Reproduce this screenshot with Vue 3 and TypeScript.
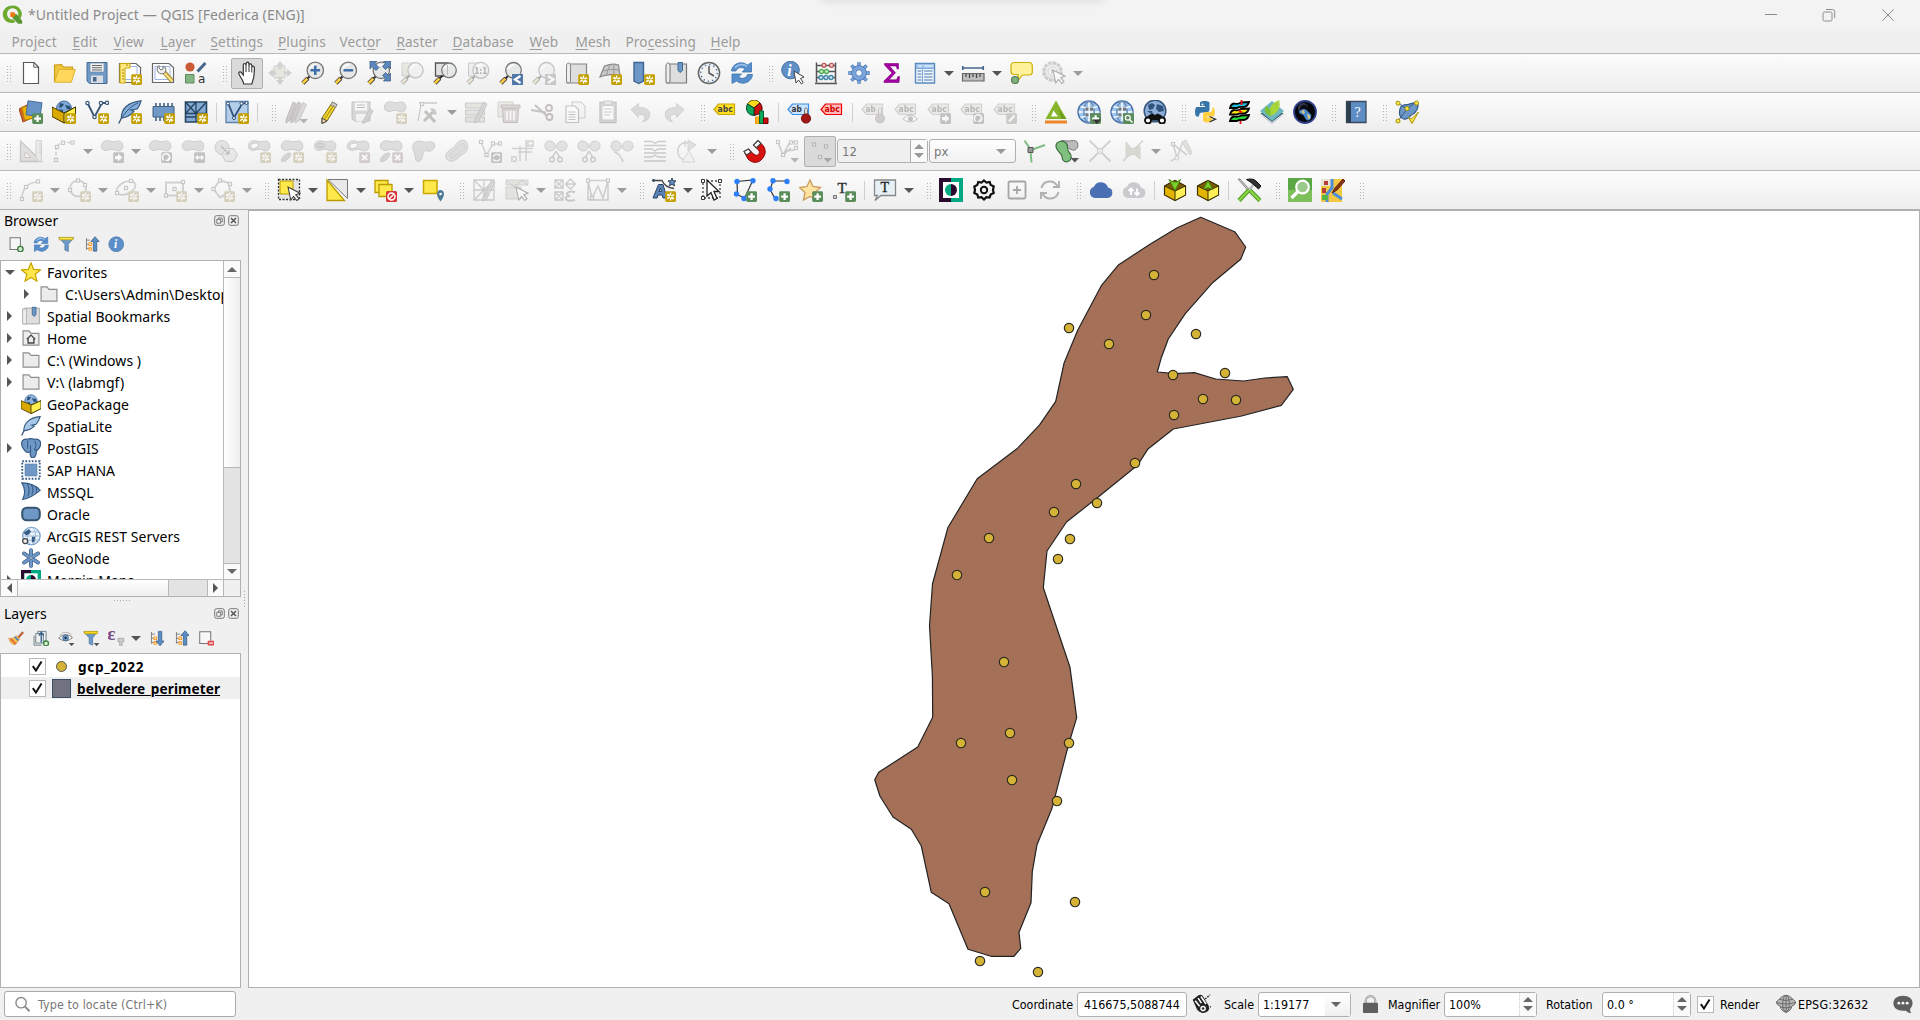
<script setup lang="ts">
interface MenuEntry { pre: string; key: string; post: string; width: number }
interface ToolItem { kind: 'grip' | 'sep' | 'drop' | 'icon' | 'spin' | 'combo'; name: string; disabled: boolean; pressed: boolean }
interface TreeRow { icon: string; label: string; arrow: '' | 'open' | 'closed'; child?: boolean }

const menus: MenuEntry[] = [
  { pre: 'Pro', key: 'j', post: 'ect', width: 46 },
  { pre: '', key: 'E', post: 'dit', width: 26 },
  { pre: '', key: 'V', post: 'iew', width: 32 },
  { pre: '', key: 'L', post: 'ayer', width: 35 },
  { pre: '', key: 'S', post: 'ettings', width: 52.5 },
  { pre: '', key: 'P', post: 'lugins', width: 46.5 },
  { pre: 'Vect', key: 'o', post: 'r', width: 42 },
  { pre: '', key: 'R', post: 'aster', width: 41 },
  { pre: '', key: 'D', post: 'atabase', width: 62 },
  { pre: '', key: 'W', post: 'eb', width: 31 },
  { pre: '', key: 'M', post: 'esh', width: 35 },
  { pre: 'Pro', key: 'c', post: 'essing', width: 70 },
  { pre: '', key: 'H', post: 'elp', width: 32 },
]

const badgeBox = (c: string, inner: string): string =>
  `<rect x="13.2" y="13.2" width="10.8" height="10.8" rx="1.4" fill="${c}"/>${inner}`
const star = badgeBox('#c4a000', '<path d="M18.6 14.6v8M15.1 16.6l7 4M22.1 16.6l-7 4M16 16l5.200 5.200" stroke="#fff" stroke-width="1.3"/><circle cx="18.600" cy="18.600" r="1.100" fill="#c4a000"/>')
const plus = badgeBox('#5a8c5a', '<path d="M18.6 15.200v6.800M15.200 18.600h6.800" stroke="#fff" stroke-width="2.200"/>')
const cross = badgeBox('#c08a96', '<path d="M16 16l5.200 5.200M21.200 16L16 21.200" stroke="#fff" stroke-width="1.900"/>')
const goRight = badgeBox('#777', '<path d="M15 17h3v-2.400l4.500 4-4.500 4V20.200H15z" fill="#fff"/>')
const both = badgeBox('#777', '<path d="M14 18.600l3-3v2h3.200v-2l3 3-3 3v-2H17v2z" fill="#fff"/>')
const rotate = badgeBox('#777', '<path d="M16 21.500a3.700 3.700 0 1 1 4.500-.2M20.500 21.500l-2.800-.2M20.500 21.300l0-2.800" stroke="#fff" stroke-width="1.500"/>')
const sync = badgeBox('#777', '<path d="M15.300 18a3.400 3.400 0 0 1 6-1.500v-1.500M22 19.300a3.400 3.400 0 0 1-6 1.500v1.500" stroke="#fff" stroke-width="1.300"/>')
const innerDrop = '<path d="M15.500 19h8.500l-4.200 4.500z" fill="#555"/>'
const blob = '<path d="M1.500 6C2 2 7 .8 11 2.500c3 1.200 5-1 8.500-.5 4 .8 4.500 8 1 9.600C17.500 13 15 10.200 12 10.200S7 12.500 4 11 1.200 8.500 1.500 6z" fill="#b4b8b4" stroke="#8c8c8c"/>'
const ring = '<ellipse cx="7.500" cy="6.700" rx="4" ry="2.600" fill="#fff" stroke="#8c8c8c" transform="rotate(-15 7.500 6.700)"/>'
const part = '<path d="M1.500 22.500c-1-3 4-9 9-8.500 1 3-4 9.500-9 8.500z" fill="#a4a8a4" stroke="#8c8c8c"/>'
const lens = (x = 14.3, r = 8.2): string =>
  `<path d="M1.800 22.200l5-5" stroke="#444" stroke-width="4.200"/><path d="M1.800 22.200l4.500-4.500" stroke="#ffce3c" stroke-width="2.600"/><path d="M6.500 17.500l3-3" stroke="#333" stroke-width="2.200"/><circle cx="${x}" cy="9.300" r="${r}" fill="#e6e8e8" stroke="#777" stroke-width="1.300"/><path d="M${x - r + 3} 8a${r - 3} ${r - 3} 0 0 1 ${r - 2}-${r - 4}" stroke="#fff" stroke-width="1.500"/>`
const paper = '<path d="M4.500 1.500h10.500l4.500 4.500v16.500h-15z" fill="#fff" stroke="#5a5a5a" stroke-width="1.200"/><path d="M14.800 1.500v4.700h4.700" stroke="#5a5a5a"/>'
const sheet = '<path d="M1.500 2.500h16.500l4.500 4v15h-21z" fill="#fff" stroke="#666" stroke-width="1.200"/><path d="M4 5.500h15v13H4z" stroke="#9db4e6"/>'
const globe = '<circle cx="12" cy="12" r="10.800" fill="#fff" stroke="#4b74ad" stroke-width="1.800"/><circle cx="12" cy="12" r="9.800" fill="#9cc4f0"/><path d="M12 1.500v21M1.500 12h21" stroke="#fff" stroke-width="1.500"/><ellipse cx="12" cy="12" rx="5.200" ry="10.500" stroke="#6d8fb5" stroke-width="1.500"/><path d="M3.500 6.500q8.500 3 17 0M3.500 17.500q8.500-3 17 0" stroke="#eef6ff" stroke-width="1.500"/><path d="M8.500 7.500h3v3h-3zM13 7.500h3v3h-3zM8.500 13.500h3v3h-3zM13 13.500h3v3h-3z" fill="#777"/>'
const label = (t: string, f: string, s: string, c: string): string =>
  `<path d="M1 9.500l4.500-5.500h16v10.500h-16z" fill="${f}" stroke="${s}" stroke-width="1.200"/><text x="4.500" y="12.300" font-size="8.500" font-weight="700" fill="${c}" font-family="DejaVu Sans" textLength="${t.length * 5.1}" lengthAdjust="spacingAndGlyphs">${t}</text>`
const tagOff = (t: string): string => label(t, '#d9d7b8', '#999', '#555')
const cursor = '<path d="M11 9l2.800 13 2.700-3.500 3.300 4 2.200-1.800-3.300-4 4.300-1.500z" fill="#fff" stroke="#444" stroke-width="1.100"/>'
const pencil = '<path d="M11 19.500L19.500 2l3.500 2L14.500 21l-4 2z" fill="#c0b0a8" stroke="#847a78"/><path d="M13 19l8-16" stroke="#928680"/>'
const box = (inner: string): string =>
  `<path d="M1.500 8L12 2.500 22.500 8v9L12 22.500 1.500 17z" fill="#e3b500" stroke="#3d3200" stroke-width="1.200"/><path d="M1.500 8L12 2.500 22.500 8 12 13z" fill="#7a5c00" stroke="#3d3200"/><path d="M12 13l10.500-5v9L12 22.500z" fill="#ffef57" stroke="#3d3200"/>${inner}`
const nodeDot = (x: number, y: number): string => `<circle cx="${x}" cy="${y}" r="2.700" fill="#2d7ff9"/>`
const square = (x: number, y: number): string => `<rect x="${x - 1.6}" y="${y - 1.6}" width="3.200" height="3.200" fill="#eee" stroke="#777"/>`
const gearTeeth = '<path d="M12 1.200v5M12 17.800v5M1.200 12h5M17.800 12h5M4.400 4.400l3.500 3.500M16.100 16.100l3.500 3.500M19.600 4.400l-3.500 3.500M7.900 16.100l-3.500 3.500"'
const scissors = '<path d="M12 12l-4 7M12 12l4 7" stroke="#888" stroke-width="1.500"/><circle cx="8" cy="20.500" r="2.300" stroke="#888" stroke-width="1.400"/><circle cx="16" cy="20.500" r="2.300" stroke="#888" stroke-width="1.400"/>'
const wings = '<path d="M10.500 10C7 14 1 11.500 1 7s3.500-6 7-4.500S12 8 10.500 10zM13.500 10c3.500 4 9.500 1.500 9.500-3s-3.500-5.500-7-4.500-4 5-2.500 7.500z" fill="#bcc2bc" stroke="#8c8c8c"/>'
const folder = '<path d="M2.500 3.500h7l2.500 3h9.500v14h-19z" fill="#ececec" stroke="#8d8d8d" stroke-width="1.400"/>'
const merginMark = '<path d="M0 0h24v24H0z" fill="#00a981"/><path d="M0 0h12v4H4v16h8v4H0z" fill="#2a0b2e"/><path d="M4 4h16v16H4z" fill="#fff"/><path d="M12 6a6 6 0 0 0 0 12z" fill="#00a981"/><path d="M12 6a6 6 0 0 1 0 12z" fill="#2a0b2e"/>'
const treeLines = '<path d="M5 3v17M5 6h5M5 12h5M5 18h5" stroke="#777" stroke-width="1.300"/><path d="M8 9.500h5v5H8zM8 16.500h5v5H8z" fill="#ff9a1f"/><path d="M9.500 11h2v2h-2zM9.500 18h2v2h-2z" fill="#fff"/>'
const arrowsPath = '<path d="M1.500 10C2 3 11-1 17.500 4l4-2.500V11H12l3-3c-4-2.800-8-1-9 2zM22.500 13.500C22 21 13 25 6.500 20L2 22.500V13h9.500l-3 3c4 2.800 8 1 9-2.500z" fill="#568dcb" stroke="#3d73af" stroke-width=".8"/><path d="M5 7C8 2.500 14 2.500 17 5.500" stroke="#9ec3ea" stroke-width="1.500"/>'

const icons: Record<string, string> = {
  logo: '<path d="M10.500 2a10 9.800 0 1 0 5 18.500l-2.700-2.800A6.400 6.400 0 1 1 18 14l3 2.800A10 9.800 0 0 0 10.500 2z" fill="#6ea92f"/><path d="M12 12l4.500-.5L23 19v3.500h-4.500l-6-6z" fill="#589632"/><path d="M9.500 9.500h5l1 3-3 3-3-1z" fill="#ee7913"/>',
  new: paper,
  open: '<path d="M2.500 21V4l7-.5 2 2.500h9v4" fill="#efc63b" stroke="#c99c1c" stroke-width="1.200"/><path d="M2.500 21.200l4.300-12.700 16.500 0-4 12.700z" fill="#ffd75a" stroke="#deb12d"/>',
  save: '<path d="M2 1.500h20v21H4.500L2 20z" fill="#6f99c6" stroke="#486a92"/><path d="M5 2h14v9H5z" fill="#f1f1f1" stroke="#6c88a6" stroke-width=".7"/><path d="M7 4.500h10M7 6.700h10M7 9h10" stroke="#666" stroke-width="1.100"/><path d="M6 14.500h12v7.500H6z" fill="#d9dde2"/><path d="M8 16h3.500v4.500H8z" fill="#48658b"/>',
  layout: sheet + '<path d="M2 2.500h10v4.500H7v15H2z" fill="#ffe680" stroke="#c9a800"/><path d="M9 3v2M4 9h2M4 12h2M4 15h2M4 18h2" stroke="#a98c00"/>' + star,
  layouts: sheet + '<path d="M13 11l8 9" stroke="#a38f3c" stroke-width="4.500"/><path d="M13.500 12l7.500 8" stroke="#ffe07a" stroke-width="2.300"/><path d="M8 4.500a4 4 0 0 0 5.500 7.500l1.500-3A4 4 0 0 0 12 5v3l-2 1-2-2z" fill="#eee" stroke="#777"/>',
  style: '<circle cx="6" cy="6" r="4.600" fill="#cc5a36"/><path d="M13.500 10.500l8-8.500" stroke="#48658b" stroke-width="3"/><path d="M1.500 13.500h8.500v8.500H1.500z" fill="#85b585" stroke="#5d8a5d"/><text x="14" y="21.800" font-size="12" fill="#333" font-family="DejaVu Sans">a</text>',
  hand: '<path d="M8 23C7 18 3.500 15 3 12.500c-.4-1.800 1.800-2.300 2.800-.7L7.500 14V4c0-2 2.500-2 2.600 0l.4-1.700c.5-1.700 2.500-1.300 2.500.3l.3 1c.6-1.300 2.600-1 2.600.8l.3 1.200c.8-1 2.400-.5 2.400 1.200 0 7 .4 9-2.600 16.200z" fill="#fff" stroke="#333" stroke-width="1.200" transform="translate(.8 0)"/><path d="M11 4v7M14 4v7M16.800 6v5.500" stroke="#333"/>',
  panSel: '<path d="M6 5h11v12H6z" fill="#d8cf98" stroke="#999"/><path d="M12 0l4 5h-2.500v3h-3V5H8zM12 24l4-5h-2.500v-3h-3v3H8zM0 12l5-4v2.500h3v3H5V16zM24 12l-5-4v2.500h-3v3h3V16z" fill="#999"/>',
  zoomIn: lens() + '<path d="M14.300 4.500v9.600M9.500 9.300h9.600" stroke="#3f6fa8" stroke-width="2.500"/>',
  zoomOut: lens() + '<path d="M9.500 9.300h9.600" stroke="#3f6fa8" stroke-width="2.500"/>',
  zoomFull: lens() + '<path d="M3 0h7L8 2.500l4 4-3 3-4-4L3 8zM23.500 0h-7l2 2.500-3 3 3 3 3-3 2 2.500zM23.500 20h-7l2-2.500-3-3 3-3 3 3 2-2.500z" fill="#5a88bc" stroke="#34587f" stroke-width=".7"/>',
  zoomSel: '<path d="M2 2h12v13H2z" fill="#d4d09a" stroke="#999"/>' + lens(15.5, 7.6),
  zoomLayer: '<path d="M2.500 2h12v13h-12z" fill="#e2e2e2" stroke="#555" stroke-width="1.300"/>' + lens(16, 7.3) + '<path d="M14.500 4v10" stroke="#bbb"/>',
  zoomNative: '<path d="M2.500 2h10v13h-10z" fill="#e2e2e2" stroke="#888"/>' + lens(14.8, 8) + '<text x="8.300" y="12.700" font-size="9" font-weight="700" fill="#444" font-family="DejaVu Sans" textLength="13" lengthAdjust="spacingAndGlyphs">1:1</text>',
  zoomLast: lens(14.5, 7.8) + '<path d="M13 13h11v11H13z" fill="#5278a8"/><path d="M21.500 15l-5.500 3.500 5.500 3.500" stroke="#fff" stroke-width="2.200"/>',
  zoomNext: lens(14.5, 7.8) + '<path d="M13 13h11v11H13z" fill="#888"/><path d="M16 15l5.500 3.500-5.500 3.500" stroke="#fff" stroke-width="2.200"/>',
  mapView: '<path d="M4 3h17.500v19H2V5z" fill="#dedede" stroke="#858585" stroke-width="1.200"/><path d="M1.500 5c0-4 4-4 4 0v16c-1.500 1.500-4 1-4-1z" fill="#eee" stroke="#858585"/>' + star,
  mapView3d: '<path d="M6.500 5q8-3 14-1L22 15q-10-3-20 1z" fill="#c9c9c9" stroke="#8b8b8b" stroke-width="1.200"/><path d="M12 4Q9 9 8.500 15M16 3.500q-.5 5 0 11M5 10q8-3 16-1" stroke="#999"/>' + star,
  bookmarkNew: '<path d="M3 1.500h9.500v18.500l-4.700 2.500L3 20z" fill="#6c97c6" stroke="#3e6692" stroke-width="1.400"/>' + star,
  bookmarks: '<path d="M5 3h17.500v19H2.500V5z" fill="#dedede" stroke="#777" stroke-width="1.200"/><path d="M2 5c0-4 4-4 4 0v16c-1.500 1.500-4 1-4-1z" fill="#eee" stroke="#777"/><path d="M14 1.500h4.500v8l-2.200 2-2.300-2z" fill="#6c97c6" stroke="#3e6692"/>',
  clock: '<circle cx="12" cy="12" r="10.600" fill="#f1f1f1" stroke="#666" stroke-width="1.500"/><path d="M12 5v7l5 3" stroke="#555" stroke-width="1.500"/><circle cx="12" cy="12" r="8.300" stroke="#3f6fa8" stroke-width="1.500" stroke-dasharray="1.200 3.140"/>',
  refresh: arrowsPath,
  identify: '<circle cx="9.500" cy="9" r="8.800" fill="#6190c6" stroke="#486f9f"/><text x="6.300" y="14.500" font-size="16" font-style="italic" font-weight="700" fill="#fff" font-family="Liberation Serif">i</text><path d="M13 10l2 12 2.500-3 3 4 1.700-1.500-2.700-4 3.500-1.500z" fill="#fff" stroke="#444"/>',
  abacus: '<path d="M2.500 1.500v20M21.500 1.500v20M1 22.500h22M2 4.500h20M2 10.500h20M2 16.500h20" stroke="#555" stroke-width="1.500"/><g stroke-width="1.300"><circle cx="10" cy="4.300" r="2" fill="#f6cccc" stroke="#b55"/><circle cx="17.500" cy="4.300" r="2" fill="#f6cccc" stroke="#b55"/><circle cx="7.500" cy="10.500" r="2" fill="#cdf0cd" stroke="#5a5"/><circle cx="12.500" cy="10.500" r="2" fill="#cdf0cd" stroke="#5a5"/><circle cx="7" cy="16.500" r="2" fill="#cde3f6" stroke="#48a"/><circle cx="12" cy="16.500" r="2" fill="#cde3f6" stroke="#48a"/><circle cx="17" cy="16.500" r="2" fill="#cde3f6" stroke="#48a"/></g>',
  gear: gearTeeth + ' stroke="#4674b3" stroke-width="3.400"/>' + gearTeeth + ' stroke="#7ba4da" stroke-width="2"/><circle cx="12" cy="12" r="5.200" fill="#f4f6fa" stroke="#4674b3" stroke-width="5"/><circle cx="12" cy="12" r="5.200" stroke="#7ba4da" stroke-width="3.600"/>',
  sigma: '<path d="M4.500 2.500h14v5.500h-1.300l-1-3H9.500l6 6.800-6.500 7h7.500l1.500-3.300h1.500l-.5 6H4v-1.500L12 12 4.500 4z" fill="#a200a2" stroke="#7d007d" stroke-width=".6"/>',
  table: '<path d="M2.500 2.500h19v19.500h-19z" fill="#eef5fd" stroke="#5a8abf" stroke-width="1.400"/><path d="M3 3h18v4H3z" fill="#9dc1ea"/><path d="M5 5h4M11 5h9" stroke="#fff"/><path d="M9.500 7v14.500M3 7.500h18" stroke="#7ea9d8"/><path d="M4.500 10h4M4.500 13h4M4.500 16h4M4.500 19h4M11 10h8.500M11 13h8.500M11 16h8.500M11 19h8.500" stroke="#4a7ab2" stroke-width="1.200"/>',
  measure: '<path d="M2 7h20M1.800 5v4M22.200 5v4" stroke="#45688f" stroke-width="1.700"/><path d="M1.500 12.500h21.500v7.500H1.500z" fill="#bdbdbd" stroke="#666" stroke-width="1.200"/><path d="M5 13v3M8.500 13v4M12 13v3M15.500 13v4M19 13v3" stroke="#444" stroke-width="1.200"/>',
  tip: '<path d="M9 13.500L9.500 19l4-5H20c2 0 3.300-1.500 3.300-3V5c0-2-1.300-3.500-3.300-3.500H5C3 1.500 2 3 2 5v5.500c0 1.500 1 3 3 3z" fill="#fff29a" stroke="#cbb000" stroke-width="1.200"/><circle cx="6" cy="19" r="3.500" fill="#7db07d" stroke="#587f58" stroke-width="1.200"/>',
  action: '<circle cx="10.500" cy="10.500" r="9" stroke="#888" stroke-width="2.500" stroke-dasharray="3.700 1"/><circle cx="10.500" cy="10.500" r="7.500" fill="#ddd" stroke="#999"/><circle cx="10.500" cy="10.500" r="4.500" fill="#f4f4f4" stroke="#999"/><path d="M9 7.500l5 3-5 3z" fill="#999"/>' + cursor,
  source: '<path d="M0 9l12-6 5 13-13 6z" fill="#d2622d" stroke="#a34217"/><path d="M4 6h13v13H4z" fill="#f0b400" stroke="#b78600" transform="rotate(-12 10 12)"/><path d="M9 .8l14 2-2 14-14-2z" fill="#6793c5" stroke="#466e9b"/>' + plus,
  gpkg: '<circle cx="12" cy="8.500" r="7.500" fill="#7ea8d6" stroke="#48709d"/><path d="M8 3l4 1-2 3-3 1zM13 5l5 1 1 4-4-1zM7 9l4 1v3z" fill="#2c4f78"/><path d="M0 7l12 6 11.500-6v9.500L12 23 0 16.500z" fill="#d9a900" stroke="#443600"/><path d="M12 13.500L23.500 7v9.500L12 23z" fill="#fff04f" stroke="#443600"/>' + star,
  shp: '<path d="M3 4l6.500 13L17 3h4.500" stroke="#3c5878" stroke-width="1.900"/><g fill="#fff" stroke="#3c5878" stroke-width="1.200"><circle cx="2.500" cy="3" r="1.700"/><circle cx="9.500" cy="17" r="1.700"/><circle cx="16" cy="3" r="1.700"/><circle cx="22" cy="2.800" r="1.700"/></g>' + star,
  feather: '<path d="M.8 23.500C4 15 9 8 20 3" stroke="#3c5878" stroke-width="1.300"/><path d="M3.500 18C3 9 10 2 23 .8c-1 3-1 5-4 8.200L13 10l3 1.200c-3 4-7 6-11.500 6.800z" fill="#84aedb" stroke="#34597f" stroke-width="1.200"/><path d="M4 18C8 11 13 6 20 3" stroke="#34597f"/>' + star,
  memory: '<path d="M5 3v18M9 3v18M13 3v18M17 3v18M21 3v18" stroke="#40617f" stroke-width="1.600"/><path d="M2 6.500h21V17H2z" fill="#7199c7" stroke="#40617f"/>' + star,
  mesh: '<path d="M1.500 2h21v20h-21z" fill="#84a9d3" stroke="#24435f" stroke-width="1.600"/><path d="M1.500 13.500h21M12 2v20M1.500 2L12 13.500M12 2L1.500 13.500M22.500 2L12 13.500M1.500 17h10" stroke="#24435f" stroke-width="1.300"/>' + star,
  virtual: '<path d="M1 1.500h22v21H1z" fill="#b4cde8" stroke="#5b82ad" stroke-width="1.300"/><path d="M3.500 4l5.500 13.500L17 4l4-1" stroke="#30527a" stroke-width="1.800"/><g fill="#fff" stroke="#30527a"><circle cx="3" cy="3.500" r="1.500"/><circle cx="9" cy="18" r="1.500"/><circle cx="16.500" cy="3.500" r="1.500"/><circle cx="21.500" cy="3" r="1.500"/></g>' + star,
  edits: '<path d="M2 20L9 2l3 1.500L6 20l-4 3zM7 20l7-18 3 1.500L11 20l-4 3z" fill="#a58b86" stroke="#857"/><path d="M11 20l8-17.500 3.500 2L15 21l-4 2z" fill="#b9aca8" stroke="#888"/>' + innerDrop,
  pencil: '<path d="M5 18L15.500 2l4.500 2.700L10 21l-5 2.500z" fill="#f2d22c" stroke="#7d6b17"/><path d="M15.500 2l4.500 2.700-1.700 2.700L13.800 5z" fill="#ccc" stroke="#888"/><path d="M8 18.500l8.500-13" stroke="#a78e13"/><path d="M5 18l5 3-5 2.500z" fill="#f0d9b0" stroke="#444"/>',
  saveEdits: '<path d="M2 2h18v19H4.500L2 19z" fill="#aaa" stroke="#777"/><path d="M5 2.500h12v8H5z" fill="#f5f5f5"/><path d="M7 5h8M7 7.500h8" stroke="#666"/><path d="M6 14h10v7H6z" fill="#eee"/><path d="M13 21l7-12 3 2-6.500 11-4 1.500z" fill="#c09a90" stroke="#877"/>',
  addPoly: blob + star,
  vertex: '<path d="M3 3h18M5 5L2 21" stroke="#888" stroke-width="1.300"/>' + square(6, 4) + '<path d="M8 21l9-9M9 11l10 11" stroke="#776" stroke-width="3"/><path d="M14 8l5 1 2 5-3 1z" fill="#887"/>',
  attrs: '<path d="M1.500 3h19v5h-19zM1.500 10h19v5h-19zM1.500 17h19v5h-19z" fill="#cfcb98" stroke="#888"/>' + pencil,
  trash: '<path d="M1 2h15v15H1z" fill="#ddd8b0" stroke="#998"/><path d="M4 5h19v3H4zM5.500 9h16l-1 13.500h-14z" fill="#d0a5a5" stroke="#866"/><path d="M10 11v9M13.500 11v9M17 11v9" stroke="#fff" stroke-width="1.500"/>',
  cut: '<path d="M1 10l15 2.500M5 5l12 11" stroke="#777" stroke-width="2"/><circle cx="19" cy="8" r="3" stroke="#866" stroke-width="1.800"/><circle cx="19.500" cy="17" r="3" stroke="#866" stroke-width="1.800"/>',
  copy: '<path d="M9 2h9l4 4v12H9z" fill="#eee" stroke="#888"/><path d="M3 6h9l3.500 3.500v13H3z" fill="#fff" stroke="#777" stroke-width="1.200"/><path d="M5.500 12h7M5.500 14.500h7M5.500 17h7M5.500 19.500h7" stroke="#777"/>',
  paste: '<path d="M4 2.500h16v20H4z" fill="#b9b49c" stroke="#777" stroke-width="1.300"/><path d="M6 5.500h12V20H6z" fill="#fff" stroke="#888"/><path d="M8 1h8v4H8z" fill="#ccc" stroke="#888"/><path d="M8 9h8M8 12h8M8 15h6" stroke="#888"/>',
  undo: '<path d="M2 9.500l7.500-6V7.500c7 0 11.500 2 11.200 7.500-.3 4-3.500 6.500-7.200 6.500 4-3 3-7.500-4-7.300v3.300z" fill="#b7aea2" stroke="#999"/>',
  redo: '<path d="M22 9.500l-7.500-6V7.500c-7 0-11.500 2-11.200 7.500.3 4 3.500 6.500 7.200 6.500-4-3-3-7.500 4-7.300v3.300z" fill="#adb6ad" stroke="#999"/>',
  abc: label('abc', '#ffdf22', '#c9a600', '#444'),
  diagram: '<path d="M8 8L1.500 4A7.500 7.500 0 0 1 14 3z" fill="#ffd91c" stroke="#550"/><path d="M8 8l6-5a7.500 7.500 0 0 1 0 10.500L8 15.500z" fill="#c80f0f" stroke="#500"/><path d="M8 8v7.500A7.500 7.500 0 0 1 1.500 4z" fill="#0da75a" stroke="#043"/><path d="M9.500 17h4v6.500h-4z" fill="#ffb020" stroke="#e79a00"/><path d="M13.500 11h4v12.500h-4z" fill="#0da75a" stroke="#063"/><path d="M17.500 18h4.500v5.500h-4.500z" fill="#c80f0f" stroke="#700"/>',
  abPin: label('ab', '#cbe4ff', '#3b8ee0', '#333') + '<path d="M17.500 16V9.500c0-2 3-2 3 0V16" fill="#ddd" stroke="#777"/><circle cx="19" cy="18.500" r="4.600" fill="#a31717" stroke="#711"/>',
  abcRed: label('abc', '#ffb9b9', '#f00000', '#d00000'),
  abPinOff: tagOff('ab') + '<path d="M17.500 16V9.500c0-2 3-2 3 0V16" fill="#ddd" stroke="#777"/><circle cx="19" cy="18.500" r="4.600" fill="#b08a9a" stroke="#98808a"/>',
  abcEye: tagOff('abc') + '<path d="M9 19q7-8 14.500 0-7.500 6-14.500 0z" fill="#fff" stroke="#777"/><circle cx="16.500" cy="18.800" r="2.500" fill="#777"/>',
  abcMove: tagOff('abc') + goRight,
  abcRotate: tagOff('abc') + rotate,
  abcEdit: tagOff('abc') + badgeBox('#998f78', '<path d="M16 21.500l5.500-6" stroke="#fff" stroke-width="2"/>'),
  peak: '<path d="M12 .5L22.500 19h-21z" fill="#87b52a"/><path d="M12 .5L14.500 9l8 10h-5z" fill="#6d9c1c"/><path d="M9.500 10.500L14 16.500H7z" fill="#fff"/><path d="M1 20.500h22v3H1z" fill="#f08326"/>',
  globeAdd: globe + plus + '<path d="M15.500 19.500h8.500l-4.200 4.500z" fill="#333"/>',
  globeFind: globe + badgeBox('#5a8c5a', '<circle cx="17.800" cy="17.800" r="2.400" stroke="#fff" stroke-width="1.300"/><path d="M19.500 19.500l3 3" stroke="#fff" stroke-width="1.500"/>'),
  globeSpy: '<circle cx="12" cy="11" r="10.800" fill="#8eb0d8" stroke="#34567f" stroke-width="1.500"/><path d="M5 5l4-2 3 2-2 4-4 1zM14 4l6 2 1 5-5 1-3-3zM4 11l5 0 1 4z" fill="#2f547f"/><path d="M1 20.500l5-5.500 3.500-1.500 2.500 1.500 2.500-1.500L18 15l5 5.500z" fill="#111"/><circle cx="5" cy="20.500" r="3" fill="#fff" stroke="#111" stroke-width="1.800"/><circle cx="19" cy="20.500" r="3" fill="#fff" stroke="#111" stroke-width="1.800"/>',
  python: '<path d="M6 2.500C7 .5 14.500.5 15.500 2.500v7c0 2-1.500 3-3 3H8c-2 0-3 1.500-3 4H2.500C.5 15.500.500 8 2.500 7H11V6H6z" fill="#3774a8"/><path d="M18 7c3.500 0 3.500 8 1.500 9.500H13v1h5v3c-1.500 2.500-8 2.500-9 0V15c0-2 1-3 3-3h4c2 0 2.500-2 2.500-5z" fill="#ffd140"/><circle cx="8.500" cy="4.500" r="1" fill="#fff"/><path d="M15.500 16.500l6 2.700-6 2.800" stroke="#333" stroke-width="1.300"/>',
  stack: '<path d="M13.500 18v6" stroke="#f01010" stroke-width="1.800"/><path d="M3 21q1-4 4-4.500 4 1 7-1l8-.5q-1 4-5 5-5-.5-7 1z" fill="#26d43c" stroke="#000" stroke-width="1.800"/><path d="M3 14.500q1-4 4-4.500 4 1 7-1l8-.5q-1 4-5 5-5-.5-7 1z" fill="#f7e410" stroke="#000" stroke-width="1.800"/><path d="M3 8q1-4 4-4.500 4 1 7-1l8-.5q-1 4-5 5-5-.5-7 1z" fill="#1fc0dd" stroke="#000" stroke-width="1.800"/><path d="M14.500 0v5M12 10.500l3 2" stroke="#f01010" stroke-width="1.800"/>',
  leaf: '<path d="M0 14l12-9 12 9-12 9.500z" fill="#3d6373"/><path d="M0 11l12-10 12 10-12 10z" fill="#6fb6bf"/><path d="M0 13.500l12 9 12-9" stroke="#fff"/><path d="M10 16C8 10 10 4 19 0c2 6 0 14-9 16z" fill="#a5d53a"/><path d="M10 16C4 14 4 9 6 6c4 2 6 6 4 10z" fill="#7dbf35"/>',
  earth: '<circle cx="12" cy="12" r="11" fill="#05060c" stroke="#2f3f88" stroke-width="1.800"/><circle cx="10" cy="8" r="5" fill="#343b4e"/><circle cx="11" cy="9" r="4.200" fill="#0a0d18"/><path d="M6 11.500c2-3 6-3.500 8-1l4 4c1 3-1 6-3 6-3-.5-3-4-5-5.500s-4-1-4-3.500z" fill="#4487c9"/><path d="M8 11l3-1 1 3-2 1zM14 14l3 1 0 4-2 0z" fill="#d2bf86"/>',
  help: '<path d="M2.500 1.500H22v21H2.500z" fill="#5e8cc4" stroke="#3a4a5c" stroke-width="1.300"/><path d="M2.500 1.500H7v21H2.500z" fill="#2c3e50"/><text x="10.500" y="17" font-size="14" fill="#fff" font-family="Liberation Serif">?</text>',
  topoEdit: '<path d="M5 9c1-5 5-4 8-4.500S18 2 21.500 3 22 12 18 14s-3 4-7 5-8-3-6-10z" fill="#6c97c6" stroke="#365b85" stroke-width="1.200"/><path d="M3 3l9 6 9-7M12 9l-9 12" stroke="#365b85"/><g fill="#ffe94a" stroke="#a58f00"><circle cx="3" cy="3.200" r="2"/><circle cx="21.500" cy="3" r="2"/><circle cx="12" cy="8.500" r="2"/><circle cx="3" cy="21" r="2"/><path d="M13.500 17.500l3 1.500L23.500 12 17 23.500z"/></g>',
  cad: '<path d="M1.500 2v20.500h21z" fill="#c9bdb4" stroke="#8d8078" stroke-width="1.300"/><path d="M6 13v5.500h6z" fill="#fff" stroke="#8d8078"/><path d="M17 1.500h5.500v21H20L17 19z" fill="#ddd8cc" stroke="#999"/><path d="M20 5h2M20 8h2M20 11h2M20 14h2" stroke="#888"/>',
  digitize: '<path d="M4 21V11Q5 4 13 3.500h8" stroke="#999" stroke-width="1.600" stroke-dasharray="3 2"/>' + square(4, 21) + square(5, 8) + square(11, 3.8) + square(20.5, 3.5),
  move: blob + goRight,
  rotateF: blob + rotate,
  scaleF: blob + both,
  simplify: '<circle cx="8" cy="8.500" r="7" fill="#c0c4c0" stroke="#8c8c8c"/><path d="M8 16l3.500-6.500h8L23.500 16l-4 6.500h-8z" fill="#d2d6d2" stroke="#8c8c8c"/><path d="M7 7l8 8M15 11v4h-4" stroke="#666" stroke-width="1.200"/>',
  addRing: blob + ring + star,
  addPart: blob + part + star,
  fillRing: blob + '<ellipse cx="7.500" cy="6.500" rx="4" ry="2.500" fill="#9ca09c" stroke="#777"/>' + star,
  delRing: blob + ring + cross,
  delPart: blob + part + cross,
  reshape: '<path d="M1.500 5C4 1 8 2 12 3s9-2 10.500 2-3 8-7 7-4 1-5 5-2 6-5 5.500S4 17 2.500 14 0 8 1.500 5z" fill="#b4b8b4" stroke="#8c8c8c"/>',
  offset: '<path d="M2 20C-1 16 3 12 7 10S11 3 16 1.500s8 4 6 9-7 5-9 8-8 5-11 1.500z" fill="#c6c6bc" stroke="#aaa896" stroke-width="1.500"/><path d="M4.500 18C3 15 7 13 9 11.500S14 5 17 4.500s4 3 2.500 5.500-7 5-8.500 7-4.500 3.500-6.500 1z" fill="#b0b8b0" stroke="#999"/>',
  reverse: '<path d="M3 3l5.500 13L15 5h7" stroke="#999" stroke-width="1.400"/>' + square(3, 3) + square(8.500, 16) + square(15, 4.500) + square(22, 4.500) + sync,
  trim: '<path d="M9 7v15M15 1v21M1 9.500h21M7 13h14" stroke="#999" stroke-width="1.500"/><path d="M0 17h6v6H0z" fill="#c99" /><path d="M16 1h7v7h-7z" fill="#b8b08a"/><path d="M1.500 18.500l3 3m0-3l-3 3M17.500 4.500h4m-2-2v4" stroke="#fff"/>',
  split: wings + scissors,
  splitPart: wings + scissors,
  merge: wings + '<path d="M4 13q6 1 9 10" stroke="#999" stroke-width="1.600"/>',
  mergeAttr: '<path d="M1 2.500h8l3 2 3-2h8M1 6.500h22M1 10h8l3 2 3-2h8M1 14h22M1 18h8l3-2 3 2h8M1 22h22" stroke="#888" stroke-width="1.300"/>',
  rotSym: '<path d="M9 21A9 9 0 0 1 7 4l5 0M9 1.500v6" stroke="#999" stroke-width="1.400"/><path d="M12 1l8 5-8 6z" fill="#bbb" stroke="#999"/><path d="M13 12l6 11H6z" fill="#eee" stroke="#aaa"/>',
  magnet: '<path d="M2 12.500l4 7.500c5 5 11 4 14.500-.5s3.500-9 .5-13l-5-5-4.500 4.500 5 5c1.500 2 1 3.500 0 4.500s-3 1.200-5-.5L6.500 10z" fill="#d81111" stroke="#860000"/><path d="M2 12.500l4.500-2.500 2.500 3-4.500 3zM16 1.500L11.500 6l2.800 2.800L19 4.500z" fill="#fff" stroke="#444" stroke-width="1.200"/>',
  snapV: '<path d="M3 3l5 13L15 3h6M10 12l10-1M8 16l8-7" stroke="#888" stroke-width="1.500"/>' + square(3, 3) + square(8, 16) + square(16, 3.500) + square(21, 3.500) + square(21, 9) + innerDrop,
  snapDots: square(6, 5.5) + square(18, 7.5) + square(12, 18) + innerDrop,
  topology: '<path d="M2.500 1.500L9 11l14-5M8.500 12l1 11.500" stroke="#7fbf85" stroke-width="2"/><path d="M6 8.500h5v5H6z" fill="#999" stroke="#555"/>',
  overlap: '<path d="M4 4C6 0 10 2 13 2s8-2 9.500 2-1.500 8-5 7-5-3-8-3-7 0-5.500-4z" fill="#bcbcbc" stroke="#777"/><path d="M1 7C1 2 8 1 11 4s0 6 3 9 3 8-1 9.500-6-2-6-5S1 12 1 7z" fill="#7fc07f" stroke="#3f6f3f" stroke-width="1.200"/>' + innerDrop,
  interX: '<path d="M1.500 1.500l21 21M22.500 1.500l-21 21" stroke="#999" stroke-width="1.800"/><circle cx="12" cy="12" r="2.500" fill="#ddd" stroke="#999"/>',
  selfSnap: '<path d="M2 22L22 1.500" stroke="#999" stroke-width="1.500"/><path d="M5 3l6 7 8-3v13l-6-5-8 3z" fill="#b5ad85" stroke="#a59d75"/>',
  tracing: '<path d="M2 22l6-3L4 5l14 11M8 19L14 2" stroke="#999" stroke-width="1.600"/>' + square(4, 5) + '<circle cx="8" cy="19" r="2" fill="#eee" stroke="#999"/><path d="M13 3l4-2 6 13-2 2z" fill="#c5bf9e" stroke="#999"/>',
  arc: '<path d="M3 21Q3 5 20 3.500" stroke="#999" stroke-width="1.500"/>' + square(3, 21) + square(7, 9) + square(19, 3.5) + star,
  circ: '<circle cx="11" cy="10.500" r="8" stroke="#999" stroke-width="2"/>' + square(11, 2.5) + square(3, 12) + square(18, 7) + star,
  ellip: '<ellipse cx="11" cy="10" rx="10" ry="6" stroke="#999" stroke-width="1.800" transform="rotate(-25 11 10)"/>' + square(11, 10) + square(16, 3) + square(2, 15) + star,
  rectF: '<path d="M3 4.500h17v13H3z" stroke="#999" stroke-width="2"/>' + square(11.5, 11) + square(3, 17.5) + square(20, 4) + star,
  polyF: '<path d="M9 2.500l9 2.500 1 9-10 5.500L2.500 11z" stroke="#999" stroke-width="2"/>' + square(9, 2.5) + square(19, 6) + square(2.5, 11) + star,
  select: '<path d="M1.500 1.500h21v20h-21z" fill="#e4e4e4" stroke="#333" stroke-width="1.300" stroke-dasharray="2 1.500"/><path d="M3 3h13v13H3z" fill="#ffe84a" stroke="#b99a00"/>' + cursor,
  selectVal: '<path d="M3 1.500h19.500v19z" fill="#e9e9e9" stroke="#777"/><path d="M2 2v20.500h17.500z" fill="#ffe84a" stroke="#b99a00" stroke-width="1.300"/>',
  deselect: '<path d="M2 2.500h13v12H2z" fill="#ffe84a" stroke="#b99a00" stroke-width="1.300"/><path d="M6 6.500h13v12H6z" fill="#ffe84a" stroke="#b99a00" stroke-width="1.300"/><rect x="13" y="13" width="11" height="11" rx="1.500" fill="#d8363b"/><circle cx="18.500" cy="18.500" r="3.500" stroke="#fff" stroke-width="1.500"/><path d="M16 21l5-5" stroke="#fff" stroke-width="1.500"/>',
  selectLoc: '<path d="M2.500 2.500h13.500v13H2.500z" fill="#ffe84a" stroke="#c9a600" stroke-width="1.500"/><path d="M19.500 23.500c-6-7-3-11.500 0-11.500s6 4.500 0 11.500z" fill="#4d7a98"/><circle cx="19.500" cy="16" r="1.300" fill="#fff"/>',
  meshEdit: '<path d="M2 2h20v20H2zM2 12h20M12 2v20M2 2l10 10L22 2M2 22l10-10" stroke="#888" stroke-width="1.300"/>' + pencil,
  meshSel: '<path d="M1 2h22v5H1zM1 9h15v12H1z" fill="#ccc8aa" stroke="#999"/><path d="M1 2l8 7 8-7 6 5" stroke="#888"/>' + cursor,
  meshTrans: '<path d="M2 2h8v8H2zM2 14h8v8H2zM2 2l8 8M10 2l-8 8M2 14l8 8M10 14l-8 8M17.500 1l5 5-5 5-5-5zM12.500 6h10" stroke="#888" stroke-width="1.300"/><path d="M22 14.500q-4-2-7 0t2 3.500q-5 0-4 3t9 1" stroke="#888" stroke-width="2"/>',
  meshForce: '<path d="M2 2.500h20v19.500H2zM2 2.500L6 20 12 8l5 12 5-17.500" stroke="#998f7a" stroke-width="1.500"/>' + square(2, 2.5) + square(22, 2.5) + square(6, 20),
  annoLayer: '<path d="M1 2.500h9q3 7 12 8" stroke="#444" stroke-width="1.300"/><path d="M20 0l1 2.700 3 .2-2.200 2 .8 3-2.600-1.600-2.600 1.600.8-3-2.200-2 3-.2z" fill="#5d8cc0" stroke="#345"/><path d="M1 20L6.500 6.500H11L15 20h-4l-.8-3H6l-.8 3zM7 13.500h2.500L8.500 10z" fill="#5b83b8" stroke="#2b4464"/><circle cx="1.500" cy="2.500" r="1.400" fill="#345"/>' + star,
  annoMod: '<path d="M3 3h17v17H3z" stroke="#444" stroke-width="1.300" stroke-dasharray="2 2"/><path d="M1.500 1.500h3v3h-3zM18.500 1.500h3v3h-3zM1.500 18.500h3v3h-3z" fill="#fff" stroke="#333"/><path d="M7 2l0 16 4-3.500 3 7.500 3-1.500-3-7h5z" fill="#fff" stroke="#222" stroke-width="1.300"/>',
  annoPoly: '<path d="M4 3.500L20 2l-8.500 18.500-7-4z" stroke="#333" stroke-width="1.200"/>' + nodeDot(4, 3.5) + nodeDot(20, 2.7) + nodeDot(3.5, 16) + nodeDot(11, 20.5) + plus,
  annoLine: '<path d="M21 3L7 3 4 11.500 9 20.500" stroke="#333" stroke-width="1.200"/>' + nodeDot(21, 3.5) + nodeDot(7, 2.8) + nodeDot(4, 11) + nodeDot(10, 20.5) + plus,
  annoStar: '<path d="M11 2l3 6.500 7.500 1-5.500 5 1.500 7.500L11 18.500 4.500 22 6 14.500.5 9.500l7.500-1z" fill="#ffe3a3" stroke="#c99a5c" stroke-width="1.300"/>' + plus,
  annoText: '<text x="5.500" y="15" font-size="15" fill="#333" stroke="#333" stroke-width=".4" font-family="Liberation Serif">T</text><path d="M1.500 17.500h3v3h-3z" fill="#ccc" stroke="#777"/>' + plus,
  textBox: '<path d="M1.500 2h21v15.500H8l-6 5 2.500-5h-3z" fill="#e6f0f5" stroke="#888" stroke-width="1.300"/><text x="7.500" y="14" font-size="14" fill="#222" stroke="#222" stroke-width=".3" font-family="Liberation Serif">T</text>',
  mergin: merginMark,
  cog: '<path d="M12 2.500l2.500 2 3.200-.5 1 3 3 1.300-.7 3.700.7 3-3 1.500-1.200 3-3.200-.3L12 21.500l-2.500-2.300-3.200.3-1-3-3-1.500.7-3-.7-3.500 3-1.500 1-3 3.200.5z" stroke="#111" stroke-width="2.200"/><circle cx="12" cy="12" r="3.200" stroke="#111" stroke-width="2"/>',
  boxPlus: '<rect x="3.500" y="3.500" width="17" height="17" rx="1.500" stroke="#a6a6a6" stroke-width="1.800"/><path d="M12 8v8M8 12h8" stroke="#a6a6a6" stroke-width="1.800"/>',
  syncGrey: '<path d="M3.500 10A8.500 8.500 0 0 1 19.500 8.500M20.500 14a8.500 8.500 0 0 1-16 1.500" stroke="#b0b0b0" stroke-width="1.900"/><path d="M21 3v6h-6M3 21v-6h6" stroke="#b0b0b0" stroke-width="1.900"/>',
  cloud: '<path d="M6 20a5.800 5.800 0 0 1-1-11.300A7.500 7.500 0 0 1 19 9.500 5.300 5.300 0 0 1 18.500 20z" fill="#4a6fb3"/>',
  cloudSync: '<path d="M6 20a5.800 5.800 0 0 1-1-11.300A7.500 7.500 0 0 1 19 9.500 5.300 5.300 0 0 1 18.500 20z" fill="#cbcbcf"/><path d="M9 17V11M6.500 13L9 10.500l2.500 2.500M15 10.500V17M12.500 14.500L15 17l2.500-2.500" stroke="#fff" stroke-width="1.800"/>',
  boxDown: box('<path d="M6 1.500l6 11 5.500-11-3.500 2.500h-4z" fill="#7bd02b" stroke="#4c8a10"/>'),
  boxUp: box('<path d="M12 2.500l4.500 9-4.500-2-4.500 2z" fill="#7bd02b" stroke="#4c8a10"/>'),
  tools: '<path d="M1 1l2 0 10 11-1.500 1z" fill="#ccc" stroke="#888"/><path d="M17 6l-5 6" stroke="#bbb" stroke-width="2.500"/><path d="M12 12L2 22.500" stroke="#4f9a1c" stroke-width="4.200"/><path d="M12 12L2 22.500" stroke="#8ad84a" stroke-width="2"/><path d="M13 12.500l10 10" stroke="#4f9a1c" stroke-width="4.400"/><path d="M13 12.500l10 10" stroke="#8ad84a" stroke-width="2.200"/><path d="M9.500 1.500q6-1.500 9.500 1.500l5 5-2.500 3-5-4.500Q13 3.500 9.500 1.500z" fill="#333" stroke="#111"/>',
  plan: '<path d="M0 0h24v24H0z" fill="#5aa845"/><path d="M0 12h24v12H0z" fill="#93cf6b" opacity=".6"/><circle cx="14.500" cy="9" r="6.300" fill="#9bc98b" stroke="#fff" stroke-width="2.200"/><path d="M10 13.500L3.500 20" stroke="#fff" stroke-width="3.200"/>',
  mapPencil: '<path d="M0 1h21v23H0z" fill="#f2c744"/><path d="M0 1h12v7H0z" fill="#e9e3d2"/><path d="M3 3h4v4H3zM1 10h4v5H1z" fill="#b83a3a"/><path d="M11 1v9l-5 6v8M12 15l9 6" stroke="#4d8edb" stroke-width="3"/><path d="M1 17h6v5H1z" fill="#57b44a"/><path d="M11 15l3-5L22 1l2 2-8 9z" fill="#8c3513" stroke="#5e210a"/>',
  addLayer: '<path d="M3 2.500h15v17H3z" fill="#f7f7f7" stroke="#777" stroke-width="1.500"/><circle cx="18" cy="19" r="4" fill="#cfe6cf" stroke="#3f7a3f" stroke-width="2"/>',
  refreshS: arrowsPath,
  filter: '<path d="M1 2.500h22L15 12v10.500l-5-2V12z" fill="#6b9aca" stroke="#4f7396"/><path d="M2 2h20v3.500H2z" fill="#ffe84a" stroke="#b99a00"/>',
  filterDrop: '<path d="M1 2.500h20L14 11.500v10.500l-5-2V11.500z" fill="#6b9aca" stroke="#4f7396"/><path d="M2 2h19v3.500H2z" fill="#ffd91c" stroke="#b99a00"/>' + innerDrop,
  collapse: treeLines + '<path d="M17.500 1l6 7h-3.500v14h-5V8h-3.500z" fill="#5a8dc4" stroke="#34587f"/>',
  expand: treeLines + '<path d="M17.500 23l6-7h-3.500V2h-5v14h-3.500z" fill="#5a8dc4" stroke="#34587f"/>',
  info: '<circle cx="12" cy="12" r="10.800" fill="#5c8fc9" stroke="#4b77a8"/><text x="8.700" y="18" font-size="17" font-style="italic" font-weight="700" fill="#fff" font-family="Liberation Serif">i</text>',
  fav: '<path d="M12 1l3.200 7.800 8.300.6-6.400 5.300 2.100 8.300L12 18.500 4.800 23l2.100-8.300L.5 9.400l8.300-.6z" fill="#ffe64a" stroke="#c7a200" stroke-width="1.400"/>',
  folder,
  home: folder + '<path d="M7 13.500l5-5 5 5M8.500 12.500V18h7v-5.500" stroke="#444" stroke-width="1.600"/>',
  bookS: '<path d="M5 2.500h17v19H2.500V4z" fill="#dedede" stroke="#aaa" stroke-width="1.200"/><path d="M2 3.500h4.500v18H2z" fill="#eee" stroke="#aaa"/><path d="M13.500 1.500h4.500v9l-2.200 2-2.300-2z" fill="#6c97c6" stroke="#3e6692"/>',
  gpkgS: '<circle cx="12" cy="8.500" r="7.500" fill="#8fb3dd" stroke="#48709d"/><path d="M8 3l4 1-2 3-3 1zM13 5l5 1 1 4-4-1zM7 9l4 1v3z" fill="#2c4f78"/><path d="M0 8l12 5 12-5v9.500L12 23.500 0 17.500z" fill="#d9a900" stroke="#443600"/><path d="M12 13.500L24 8v9.500L12 23.500z" fill="#fff04f" stroke="#443600"/>',
  featherS: '<path d="M.8 23.500C4 15 9 8 20 3" stroke="#3c5878" stroke-width="1.500"/><path d="M3.500 17.500C3 9 10 2 23 .8c-1 3-2 6-5 9.200l-5 1 3 1.200c-3 3-7 5-11.500 5.300z" fill="#a8c8ea" stroke="#34597f" stroke-width="1.400"/>',
  elephant: '<path d="M1 8C0 2 4 1 8 1.500c3-1.500 6-.5 8 0 5-.8 8 2 7.500 6s-3 7-5 7c0 4 0 8-3.500 9s-4-3-4-7c-2 1-4 2-6-1S1 12 1 8z" fill="#6f98c6" stroke="#365b85" stroke-width="1.500"/><path d="M8 3v10M16 3c3 4 2 8 0 11l4 1M11.500 9v8" stroke="#365b85" stroke-width="1.200"/>',
  sap: '<path d="M5 5h14v14H5z" fill="#6f98c6" stroke="#4f7aa8"/><path d="M1.500 1.500h21v21h-21z" stroke="#365b85" stroke-width="2.200" stroke-dasharray="2 1.820"/>',
  mssql: '<path d="M1 1c4 6 5 12 1 20 8-1 15-6 21-11C17 3 8 1 1 1z" fill="#6f98c6" stroke="#365b85" stroke-width="1.400"/><path d="M7 1.500q5 7 1 16M12 2.500q4 6 1 12.500M17 5q3 4 1 8" stroke="#365b85" stroke-width="1.300"/>',
  oracle: '<rect x="1.500" y="4.500" width="21" height="15" rx="5.500" fill="#6f98c6" stroke="#365472" stroke-width="2.500"/>',
  arcgis: '<circle cx="12.500" cy="12" r="10.500" fill="#eaf2fa" stroke="#6f98c6" stroke-width="1.400"/><ellipse cx="12.500" cy="12" rx="5" ry="10.500" stroke="#8fb0d4"/><path d="M3 7h19M2 12h21M3 17h19" stroke="#8fb0d4"/><path d="M3 8l6-4 3 2-2 4-4 1zM13 13l4 0-1 6-3 1z" fill="#365b85"/><circle cx="5" cy="18" r="3" fill="#eee" stroke="#444" stroke-width="1.500"/>',
  geonode: '<path d="M12 2.500v19M3.500 6.500l17 11M20.500 6.500l-17 11" stroke="#365b85" stroke-width="4.600" stroke-linecap="round"/><path d="M12 2.500v19M3.500 6.500l17 11M20.500 6.500l-17 11" stroke="#6f98c6" stroke-width="3" stroke-linecap="round"/><circle cx="12" cy="12" r="1.600" fill="#fff" stroke="#365b85"/>',
  brush: '<path d="M22 3l-7 8" stroke="#c0653c" stroke-width="3.500"/><path d="M12 8l5 5-6 8c-5 1-8-3-10-9 4 1 8 0 11-4z" fill="#f3c04a" stroke="#d98a3a"/><path d="M4 13l7 7" stroke="#e2603a" stroke-width="2.500"/><path d="M10 10l5 5" stroke="#4d86d0" stroke-width="2.500"/>',
  addGroup: '<path d="M7 5V2h12v14h-2M4 8V5h11v14H4zM1.500 8v14h11" stroke="#6b7f86" stroke-width="1.400"/><path d="M12 18V4M8.500 8L12 3.500 15.500 8" stroke="#36618f" stroke-width="2"/><circle cx="19" cy="19.500" r="3.500" fill="#dff0df" stroke="#3f8a3f" stroke-width="2"/>',
  eye: '<path d="M1 12Q11 2 21 11q-9 9-20 1z" fill="#fff" stroke="#777" stroke-width="1.400"/><path d="M2 8Q11-1 20 7" stroke="#999"/><circle cx="11" cy="11.500" r="4.300" fill="#6b9aca" stroke="#365b85"/><circle cx="11" cy="11.500" r="1.600" fill="#123"/>' + innerDrop,
  epsilon: '<text x="-1" y="14.500" font-size="28" font-weight="700" fill="#7b4f86" font-family="Liberation Serif">ε</text><path d="M14.500 12h8.500v5h-2.500v7h-3.500v-7h-2.500z" fill="#ccc" stroke="#999"/>',
  removeLayer: '<path d="M2.500 2.500h16v17h-16z" fill="#f7f7f7" stroke="#777" stroke-width="1.500"/><rect x="14" y="15.500" width="10" height="7" rx="1.500" fill="#e04848"/><path d="M16 19h6" stroke="#fff" stroke-width="1.600"/>',
  float: '<rect x="1.500" y="1.500" width="21" height="21" rx="4" stroke="#666" stroke-width="1.900"/><path d="M9.500 6.500h8.500v8.500H9.500z" stroke="#666" stroke-width="1.800"/><path d="M6 9.500h8.500V18H6z" fill="#f0f0f0" stroke="#666" stroke-width="1.800"/>',
  close: '<rect x="1.500" y="1.500" width="21" height="21" rx="4" stroke="#666" stroke-width="1.900"/><path d="M6.500 6.500l11 11M17.500 6.500l-11 11" stroke="#555" stroke-width="3.300"/>',
  check: '<path d="M4.500 11.500l5 7L18.500 4" stroke="#111" stroke-width="3.200"/>',
  search: '<circle cx="10" cy="9.500" r="7.300" stroke="#8a8a8a" stroke-width="2"/><path d="M15.500 15l6.500 6.500" stroke="#8a8a8a" stroke-width="2.800"/>',
  extents: '<path d="M2 7L9 1.500q4-2 6 2L20 12q2 2 1.500 6t-6 4.500T7 18z" fill="#222"/><path d="M5 8l8 10M8.500 5l4 6M12 3l6 9" stroke="#fff" stroke-width="1.900"/><circle cx="14.500" cy="17.500" r="4.200" fill="#fff" stroke="#222" stroke-width="1.700"/><circle cx="14.500" cy="17.500" r="1.500" fill="#222"/><path d="M17 6l6-5M20 18l4-3" stroke="#222" stroke-width="1.600" stroke-dasharray="2 1.500"/>',
  lock: '<path d="M6 11V8a6 6 0 0 1 12 0v3" stroke="#9b9b9b" stroke-width="2.800"/><path d="M6 11V8a6 6 0 0 1 12 0v3" stroke="#ddd"/><rect x="2.500" y="10.500" width="19" height="13" rx="1.500" fill="#5f5f5f"/>',
  crs: '<path d="M4 6Q12-3 20 6l4 4q-2 4-5 4.500-1 6-7 7.500-6-1.500-7-7.500Q2 14 0 10z" fill="#b9b9b9" stroke="#6a6a6a" stroke-width="1.200"/><ellipse cx="12" cy="11.500" rx="4" ry="10" stroke="#6a6a6a" stroke-width="1.200"/><path d="M0 10q12 4 24 0M4 6.500q8 2.500 16 0M5 15.500q7 2.500 14 0M12 1.500v20" stroke="#6a6a6a" stroke-width="1.200"/>',
  bubble: '<path d="M12 2C5 2 .5 5.500.500 11s4.500 9 11.500 9h3.500q2 2.500 6.500 3-2-2.500-1.500-5Q23.500 15 23.500 11c0-5.500-4.500-9-11.500-9z" fill="#5f5f5f"/><circle cx="7" cy="11" r="1.700" fill="#fff"/><circle cx="12" cy="11" r="1.700" fill="#fff"/><circle cx="17" cy="11" r="1.700" fill="#fff"/>',
}

// Toolbar shorthand: ":" handle, "|" separator, "v" menu arrow, "~" disabled, "!" pressed
const parse = (spec: string): ToolItem[] =>
  spec.trim().split(/\s+/).map((token): ToolItem => {
    const disabled = token.includes('~')
    const pressed = token.includes('!')
    const name = token.replace(/[~!]/g, '')
    const kinds: Record<string, ToolItem['kind']> = { ':': 'grip', '|': 'sep', v: 'drop', spin: 'spin', combo: 'combo' }
    return { kind: kinds[name] ?? 'icon', name, disabled, pressed }
  })

const toolbars: ToolItem[][] = [
  parse(`: new open save layout layouts style : hand! panSel~ zoomIn zoomOut zoomFull zoomSel~ zoomLayer zoomNative~
    zoomLast zoomNext~ mapView mapView3d bookmarkNew bookmarks clock refresh : identify abacus gear sigma table v measure v tip action~ v~`),
  parse(`: source gpkg shp feather memory mesh | virtual | : edits~ pencil saveEdits~ addPoly~ vertex~ v~ attrs~ trash~ cut~ copy~
    paste~ undo~ redo~ : abc diagram | abPin abcRed | abPinOff~ abcEye~ abcMove~ abcRotate~ abcEdit~ : peak globeAdd globeFind globeSpy
    : python stack leaf earth : help : topoEdit`),
  parse(`: cad~ digitize~ v~ move~ v~ rotateF~ scaleF~ simplify~ addRing~ addPart~ fillRing~ delRing~ delPart~ reshape~ offset~
    reverse~ trim~ split~ splitPart~ merge~ mergeAttr~ rotSym~ v~ : magnet snapV~ snapDots~! spin combo topology overlap interX~ selfSnap~ v~ tracing~`),
  parse(`: arc~ v~ circ~ v~ ellip~ v~ rectF~ v~ polyF~ v~ : select v selectVal v deselect v selectLoc : meshEdit~ meshSel~ v~ meshTrans~
    meshForce~ v~ : annoLayer v annoMod annoPoly annoLine annoStar annoText | textBox v : mergin cog boxPlus syncGrey : cloud cloudSync
    | boxDown boxUp | tools : plan mapPencil :`),
]

const browserTools = ['addLayer', 'refreshS', 'filter', 'collapse', 'info']
const layerTools = ['brush', 'addGroup', 'eye', 'filterDrop', 'epsilon', 'v', 'expand', 'collapse', 'removeLayer']

const tree: TreeRow[] = [
  { icon: 'fav', label: 'Favorites', arrow: 'open' },
  { icon: 'folder', label: 'C:\\Users\\Admin\\Desktop', arrow: 'closed', child: true },
  { icon: 'bookS', label: 'Spatial Bookmarks', arrow: 'closed' },
  { icon: 'home', label: 'Home', arrow: 'closed' },
  { icon: 'folder', label: 'C:\\ (Windows )', arrow: 'closed' },
  { icon: 'folder', label: 'V:\\ (labmgf)', arrow: 'closed' },
  { icon: 'gpkgS', label: 'GeoPackage', arrow: '' },
  { icon: 'featherS', label: 'SpatiaLite', arrow: '' },
  { icon: 'elephant', label: 'PostGIS', arrow: 'closed' },
  { icon: 'sap', label: 'SAP HANA', arrow: '' },
  { icon: 'mssql', label: 'MSSQL', arrow: '' },
  { icon: 'oracle', label: 'Oracle', arrow: '' },
  { icon: 'arcgis', label: 'ArcGIS REST Servers', arrow: '' },
  { icon: 'geonode', label: 'GeoNode', arrow: '' },
  { icon: 'mergin', label: 'Mergin Maps', arrow: 'closed' },
]

const perimeter =
  '1200.7,217.3 1234.7,231.7 1245.7,247 1240.7,259.3 1212,283.3 1185.3,313.7 1168.3,339 1161.3,357.7 1157.3,372 1175,373.7 1194.3,372.7 ' +
  '1215.7,379 1243.7,381 1264.7,378 1287.3,376.7 1293.3,389.3 1281.3,405.3 1241.7,416 1173.3,429 1147.7,449.3 1139.3,462.3 1135,467.3 ' +
  '1097.3,497.7 1066.5,522 1047,551 1043.3,587.8 1070,667.3 1076.7,717.7 1068.7,744 1052,808.3 1037,844.7 1032.3,871.7 1031,902.7 ' +
  '1019,932.3 1020.7,948.3 1014,956.3 991,956.3 968,949.3 949,903.7 931.3,892.3 921.3,846 911.3,829.3 893,817 880,796.3 874.7,779.7 ' +
  '878.7,772.3 917.7,747 932.7,717.3 932.4,676 929.5,625.7 932.500,584 947.8,527.8 977.2,478.8 1017.6,448.2 1039.6,424.9 1055.7,401.3 ' +
  '1064,363.3 1077.7,330.3 1101.3,285.7 1118.7,264.7 1150,244.3 1177.3,227.7'

const points: [number, number][] = [
  [1154, 275], [1146, 315], [1069, 328], [1196, 334], [1109, 344], [1173, 375], [1225, 373], [1203, 399], [1236, 400], [1174, 415],
  [1135, 463], [1076, 484], [1097, 503], [1054, 512], [1070, 539], [1058, 559], [989, 538], [957, 575], [1004, 662], [961, 743],
  [1010, 733], [1069, 743], [1012, 780], [1057, 801], [985, 892], [1075, 902], [980, 961], [1038, 972],
]
</script>

<template>
  <div class="window">
    <header class="titlebar">
      <svg class="logo" viewBox="0 0 24 24" fill="none" v-html="icons.logo"></svg>
      <span class="title">*Untitled Project — QGIS [Federica (ENG)]</span>
      <div class="hint"></div>
      <div class="controls">
        <svg viewBox="0 0 14 14"><path d="M2 6.500h12" /></svg>
        <svg viewBox="0 0 14 14"><rect x="1" y="4" width="9" height="9" rx="1.500" /><path d="M4 1.500h6.500a2.200 2.200 0 0 1 2.200 2.200v6.500" /></svg>
        <svg viewBox="0 0 14 14"><path d="M1.500 1.500l11 11M12.500 1.500l-11 11" /></svg>
      </div>
    </header>

    <nav class="menubar">
      <span v-for="m in menus" :key="m.pre + m.key + m.post" :style="{ width: m.width + 'px' }">{{ m.pre }}<u>{{ m.key }}</u>{{ m.post }}</span>
    </nav>

    <div v-for="(bar, b) in toolbars" :key="b" class="toolbar">
      <template v-for="(item, i) in bar" :key="i">
        <span v-if="item.kind === 'grip'" class="grip" :class="{ first: i === 0 }"></span>
        <span v-else-if="item.kind === 'sep'" class="sep"></span>
        <span v-else-if="item.kind === 'drop'" class="drop" :class="{ off: item.disabled }"></span>
        <span v-else-if="item.kind === 'spin'" class="field spin tolerance"><span class="value">12</span><span class="steps"><i class="up"></i><i class="down"></i></span></span>
        <span v-else-if="item.kind === 'combo'" class="field unit"><span class="value">px</span><i class="down"></i></span>
        <span v-else class="tool" :class="{ pressed: item.pressed, off: item.disabled }">
          <svg viewBox="0 0 24 24" fill="none" v-html="icons[item.name]"></svg>
        </span>
      </template>
    </div>

    <main class="workspace">
      <aside class="side">
        <section class="dock">
          <div class="dock-title"><span>Browser</span>
            <svg viewBox="0 0 24 24" fill="none" v-html="icons.float"></svg>
            <svg viewBox="0 0 24 24" fill="none" v-html="icons.close"></svg>
          </div>
          <div class="dock-tools browser-tools">
            <svg v-for="t in browserTools" :key="t" viewBox="0 0 24 24" fill="none" v-html="icons[t]"></svg>
          </div>
          <div class="browser">
            <div class="tree">
              <div v-for="row in tree" :key="row.label" class="row" :class="{ child: row.child }">
                <span class="arrow" :class="row.arrow"></span>
                <svg viewBox="0 0 24 24" fill="none" v-html="icons[row.icon]"></svg>
                <span class="label">{{ row.label }}</span>
              </div>
            </div>
            <div class="vbar"><span class="btn"><i class="up"></i></span><span class="thumb"></span><span class="track"></span><span class="btn"><i class="down"></i></span></div>
            <div class="hbar"><span class="btn"><i class="left"></i></span><span class="thumb"></span><span class="track"></span><span class="btn"><i class="right"></i></span></div>
            <div class="corner"></div>
          </div>
        </section>
        <div class="split-h"></div>
        <section class="dock layers-dock">
          <div class="dock-title"><span>Layers</span>
            <svg viewBox="0 0 24 24" fill="none" v-html="icons.float"></svg>
            <svg viewBox="0 0 24 24" fill="none" v-html="icons.close"></svg>
          </div>
          <div class="dock-tools layer-tools">
            <template v-for="t in layerTools" :key="t">
              <span v-if="t === 'v'" class="drop"></span>
              <svg v-else viewBox="0 0 24 24" fill="none" v-html="icons[t]"></svg>
            </template>
          </div>
          <div class="layers">
            <div class="layer">
              <span class="check"><svg viewBox="0 0 24 24" fill="none" v-html="icons.check"></svg></span>
              <span class="symbol"><i class="dot"></i></span>
              <span class="name gcp">gcp_2022</span>
            </div>
            <div class="layer current">
              <span class="check"><svg viewBox="0 0 24 24" fill="none" v-html="icons.check"></svg></span>
              <span class="symbol"><i class="swatch"></i></span>
              <span class="name active">belvedere_perimeter</span>
            </div>
          </div>
        </section>
      </aside>
      <div class="split-v"></div>
      <div class="map">
        <svg viewBox="249 211 1670 776">
          <polygon :points="perimeter" fill="#a57058" stroke="#232323" stroke-width="1.200" stroke-linejoin="round" />
          <circle v-for="p in points" :key="p.join()" :cx="p[0]" :cy="p[1]" r="4.700" fill="#d4b336" stroke="#2c2a20" stroke-width="1.150" />
        </svg>
      </div>
    </main>

    <footer class="status">
      <div class="locator"><svg viewBox="0 0 24 24" fill="none" v-html="icons.search"></svg><span>Type to locate (Ctrl+K)</span></div>
      <span class="text coord-label">Coordinate</span>
      <span class="input coord"><span>416675,5088744</span></span>
      <svg class="extents" viewBox="0 0 24 24" fill="none" v-html="icons.extents"></svg>
      <span class="text scale-label">Scale</span>
      <span class="input scale"><span>1:19177</span><b><i class="down"></i></b></span>
      <svg class="lock" viewBox="0 0 24 24" fill="none" v-html="icons.lock"></svg>
      <span class="text magnifier-label">Magnifier</span>
      <span class="input magnifier"><span>100%</span><b class="steps"><i class="up"></i><i class="down"></i></b></span>
      <span class="text rotation-label">Rotation</span>
      <span class="input rotation"><span>0.0 °</span><b class="steps"><i class="up"></i><i class="down"></i></b></span>
      <span class="check render"><svg viewBox="0 0 24 24" fill="none" v-html="icons.check"></svg></span>
      <span class="text render-label">Render</span>
      <svg class="crs" viewBox="0 0 24 24" fill="none" v-html="icons.crs"></svg>
      <span class="text epsg">EPSG:32632</span>
      <svg class="bubble" viewBox="0 0 24 24" fill="none" v-html="icons.bubble"></svg>
    </footer>
  </div>
</template>

<style>
body { margin: 0; overflow: hidden; }
</style>

<style scoped>
* { box-sizing: border-box; }
.window { width: 1920px; height: 1020px; display: flex; flex-direction: column; background: #f0f0f0; overflow: hidden; font-family: "Noto Sans", "Open Sans", sans-serif; color: #000; white-space: nowrap; }
svg { display: block; flex: none; }
i { display: block; width: 0; height: 0; border: 5px solid transparent; flex: none; }
i.up { border-top: 0; border-bottom-color: #666; }
i.down { border-bottom: 0; border-top-color: #666; }
i.left { border-left: 0; border-right-color: #555; }
i.right { border-right: 0; border-left-color: #555; }

.titlebar { height: 29px; flex: none; display: flex; align-items: center; background: #f3f3f3; position: relative; }
.logo { width: 21px; height: 21px; margin-left: 2px; margin-top: -1px; }
.title { margin-left: 5px; width: 280px; font-size: 14px; letter-spacing: .07px; color: #8b8b8b; margin-top: -1px; }
.hint { position: absolute; left: 820px; top: -10px; width: 286px; height: 10px; border-radius: 6px; box-shadow: 0 1px 8px rgba(0, 0, 0, .1); }
.controls { margin-left: auto; display: flex; gap: 45px; margin-right: 25px; }
.controls svg { width: 14px; height: 14px; fill: none; stroke: #8c8c8c; stroke-width: 1; }

.menubar { height: 24px; flex: none; display: flex; align-items: center; gap: 15px; padding-left: 11.500px; font-size: 13.600px; letter-spacing: .12px; color: #9b9b9b; }
.menubar span { display: block; flex: none; }
.menubar u { text-underline-offset: 2px; }

.toolbar { height: 39px; flex: none; display: flex; align-items: center; border-top: 1px solid #b9b9b9; background: linear-gradient(#fcfcfc, #eee); }
.grip { width: 18px; height: 17px; flex: none; display: flex; }
.grip::after { content: ""; margin-left: 9px; width: 5px; height: 17px; background-image: radial-gradient(circle, #b5b5b5 0.600px, transparent 0.900px); background-size: 3px 3px; }
.grip.first { width: 14.500px; }
.grip.first::after { margin-left: 6px; }
.sep { width: 8px; height: 19px; flex: none; display: flex; justify-content: center; }
.sep::after { content: ""; width: 1px; background: #cfcfcf; }
.drop { width: 15px; flex: none; display: flex; justify-content: center; }
.drop::after { content: ""; border: 5px solid transparent; border-top-color: #555; border-bottom: 0; margin-left: -1px; }
.drop.off::after { border-top-color: #9c9c9c; }
.tool { width: 33px; height: 31px; flex: none; display: flex; align-items: center; justify-content: center; }
.tool svg { width: 24px; height: 24px; }
.tool.off svg { filter: grayscale(.7) opacity(.4); }
.tool.pressed { background: #dadada; border: 1px solid #b0b0b0; border-radius: 2px; width: 32px; margin: 0 .500px; }
.field { display: flex; align-items: center; height: 24px; border: 1px solid #b0b0b0; border-radius: 3px; flex: none; font: 13px "DejaVu Sans Condensed", "DejaVu Sans", sans-serif; color: #777; background: linear-gradient(#fefefe, #f2f2f2); }
.field .value { flex: 1; padding-left: 4px; }
.field i { margin: 2px; }
.field i.up { border-bottom-color: #999; }
.field i.down { border-top-color: #999; }
.tolerance { width: 91px; background: #f0f0f0; margin-left: 0.500px; }
.tolerance .steps { width: 17px; height: 22px; border-left: 1px solid #b0b0b0; background: #fafafa; display: flex; flex-direction: column; align-items: center; justify-content: center; }
.unit { width: 87px; margin: 0 1px 0 1px; }
.unit i.down { margin-right: 9px; }

.workspace { flex: 1; display: flex; min-height: 0; border-top: 1px solid #b0b0b0; }
.side { width: 241px; flex: none; display: flex; flex-direction: column; }
.dock { display: flex; flex-direction: column; flex: none; }
.layers-dock { flex: 1; }
.dock-title { height: 22px; display: flex; align-items: center; padding: 0 2px 0 4px; font-size: 14px; }
.dock-title span { flex: 1; margin-top: -2px; }
.dock-title svg { width: 11px; height: 11px; margin-left: 3px; margin-top: -2px; }
.layers-dock .dock-title { padding-bottom: 1px; }
.dock-tools { display: flex; align-items: center; height: 28px; padding: 0 0 4px 8px; gap: 8.500px; }
.dock-tools svg { width: 16.500px; height: 16.500px; }
.dock-tools .drop { width: 9px; margin: 0 -1.500px; }
.layer-tools { height: 27px; padding-bottom: 3px; }
.browser { height: 337px; border: 1px solid #b0b0b0; background: #fff; display: grid; grid-template: 318px 17px / 222px 17px; }
.tree { overflow: hidden; }
.row { height: 22px; display: flex; align-items: center; font-size: 14px; letter-spacing: .06px; }
.row.child { padding-left: 17px; }
.row svg { width: 20px; height: 20px; margin-left: -1px; }
.row.child svg { margin-left: 0; }
.label { margin-left: 6px; flex: none; }
.arrow { width: 21px; flex: none; display: flex; padding-left: 6px; }
.arrow.closed::after { content: ""; border: 5px solid transparent; border-left-color: #555; border-right: 0; }
.arrow.open { padding-left: 4px; }
.arrow.open::after { content: ""; border: 5px solid transparent; border-top-color: #555; border-bottom: 0; }
.vbar { display: flex; flex-direction: column; border-left: 1px solid #b8b8b8; }
.hbar { display: flex; border-top: 1px solid #b8b8b8; }
.btn { display: flex; align-items: center; justify-content: center; width: 16px; height: 16px; background: #fafafa; flex: none; }
.thumb { background: linear-gradient(90deg, #fff, #eee); border: solid #b8b8b8; border-width: 1px 0; height: 191px; }
.track { background: #e3e3e3; flex: 1; }
.vbar .btn:last-child { border-top: 1px solid #b8b8b8; }
.hbar .thumb { background: linear-gradient(#fff, #eee); width: 152px; height: 16px; border-width: 0 1px; }
.hbar .btn:last-child { border-left: 1px solid #b8b8b8; }
.corner { border: solid #b8b8b8; border-width: 1px 0 0 1px; background: #f0f0f0; }
.split-h { height: 7px; margin-left: 113px; width: 18px; background-image: radial-gradient(circle, #aaa 0.600px, transparent 0.900px); background-size: 3px 7px; }
.layers { flex: 1; border: 1px solid #b0b0b0; background: #fff; padding-top: 1px; }
.layer { height: 22px; display: flex; align-items: center; padding-left: 28px; font-size: 13.600px; font-weight: 700; }
.layer.current { background: #efefef; }
.check { width: 17px; height: 17px; border: 1px solid #b9b9b9; background: #fff; display: flex; align-items: center; justify-content: center; flex: none; }
.check svg { width: 15px; height: 15px; }
.symbol { width: 32px; display: flex; justify-content: center; margin-left: -.500px; margin-right: -.500px; }
.dot { width: 11px; height: 11px; border: 1px solid #555; border-radius: 50%; background: #d4b336; }
.swatch { width: 19px; height: 19px; border: 1px solid #3b5066; background: #72717f; }
.gcp { letter-spacing: .650px; margin-left: 1px; }
.active { text-decoration: underline; letter-spacing: .100px; }

.split-v { width: 7px; flex: none; display: flex; align-items: center; justify-content: center; }
.split-v::after { content: ""; width: 3px; height: 18px; background-image: radial-gradient(circle, #aaa 0.600px, transparent 0.900px); background-size: 3px 3px; }
.map { flex: 1; border: 1px solid #b0b0b0; background: #fff; }
.map svg { width: 1670px; height: 776px; }

.status { height: 32px; flex: none; display: flex; align-items: center; padding: 0 0 0 4px; font: 12.400px "DejaVu Sans Condensed", "DejaVu Sans", sans-serif; }
.locator { width: 232px; height: 26px; border: 1px solid #a9a9a9; border-radius: 3px; background: #fff; display: flex; align-items: center; padding-left: 9px; color: #777; }
.locator svg { width: 17px; height: 17px; margin-right: 7px; }
.locator span { letter-spacing: .120px; }
.text { flex: none; }
.coord-label { margin-left: 776px; width: 65px; }
.input { height: 25px; border: 1px solid #b0b0b0; border-radius: 3px; background: #fff; display: flex; align-items: center; padding-left: 4px; flex: none; }
.input span { flex: 1; }
.input b { width: 25px; height: 23px; display: flex; align-items: center; justify-content: center; background: linear-gradient(#fff, #efefef); }
.input b.steps { width: 17px; flex-direction: column; gap: 4px; border-left: 1px dotted #ccc; background: #fafafa; }
.coord { width: 110px; padding-left: 6px; }
.extents { width: 20px; height: 20px; margin: 0 13px 0 4px; }
.scale-label { width: 34px; }
.scale { width: 93px; }
.scale i { margin-right: 4px; }
.lock { width: 19px; height: 20px; margin: 0 8px 0 10px; }
.magnifier-label { width: 56px; }
.magnifier { width: 93px; }
.rotation-label { margin-left: 9px; width: 56px; }
.rotation { width: 89px; }
.render { margin-left: 6px; }
.render-label { margin-left: 6px; width: 56px; }
.crs { width: 20px; height: 20px; }
.epsg { margin-left: 2px; width: 95px; letter-spacing: .180px; }
.bubble { width: 20px; height: 20px; }
</style>
